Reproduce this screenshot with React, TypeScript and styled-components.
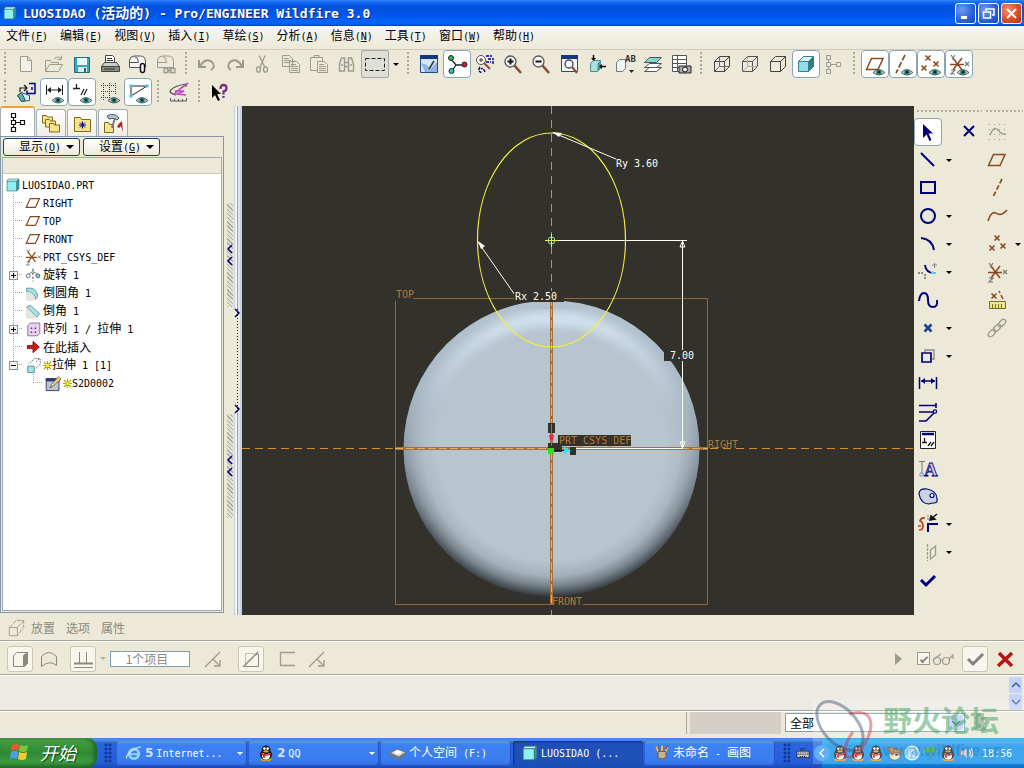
import React, { Fragment, ReactNode } from 'react';
import styled, { createGlobalStyle, css } from 'styled-components';

const CJK = '"Noto Sans CJK SC", sans-serif';
const MONO = '"DejaVu Sans Mono", "Noto Sans CJK SC", monospace';
const FACE = '#ece9d8';
const NAVY = '#00007c';
const BROWN = '#8a4a20';
const GRAY = '#9c9a8c';

const Global = createGlobalStyle`
  *, *::before, *::after { box-sizing: border-box; }
  body { margin: 0; background: ${FACE}; font: 12px/18px ${CJK}; color: #000; }
  button, input, select { font: inherit; color: inherit; margin: 0; padding: 0; border: 0; background: none; }
  svg { display: block; flex: none; overflow: visible; }
`;

/* ---------- text: CJK at full size, Latin in half-width cells ---------- */

const Run = styled.span`
  white-space: pre;
`;
const Latin = styled.span<{ $size: number }>`
  font-family: ${MONO};
  font-size: ${(p) => p.$size}px;
`;

function Label({ text, hot, size = 10 }: { text: string; hot?: string; size?: number }) {
  const parts = text.split(/([\u2e80-\u9fff]+)/).filter(Boolean);
  return (
    <Run>
      {parts.map((part, i) =>
        /[\u2e80-\u9fff]/.test(part) ? (
          <Fragment key={i}>{part}</Fragment>
        ) : (
          <Latin key={i} $size={size}>{part}</Latin>
        ),
      )}
      {hot && (
        <Latin $size={size}>
          (<u>{hot}</u>)
        </Latin>
      )}
    </Run>
  );
}

/* ---------- icons, drawn on a 20 by 20 grid ---------- */

const eye = (
  <g>
    <path d="M8 18.500q5.500-6 12 0q-6 5-12 0z" fill="#b9c9c4" stroke="#444" strokeWidth=".8" />
    <circle cx="14" cy="18.200" r="2.700" fill="#1f7d78" />
    <circle cx="14" cy="18.200" r="1.100" fill="#012" />
  </g>
);
const planeShape = <path d="M6.500 4.500H18L13 15.500H1.500z" />;
const csys = (
  <g fill="none" stroke={BROWN} strokeWidth="1.500">
    <path d="M1 10.500H15M4 4l9 12M13 4L4 16M8.500 9v3" />
    <path d="M2 1l2 3l2-3M4 4v2M2 16h4l-4 4h4M16 8l4 4M20 8l-4 4" stroke="#777" strokeWidth="1.200" />
  </g>
);
const cross = (x: number, y: number, r = 2.5) => `M${x - r} ${y - r}l${2 * r} ${2 * r}M${x + r} ${y - r}l${-2 * r} ${2 * r}`;
const cube = (front: string, top: string, side: string, line: string, inner?: string) => (
  <g stroke={line} strokeLinejoin="round">
    <path d="M2.500 7.500h10v10h-10z" fill={front} />
    <path d="M2.500 7.500l5-5h10l-5 5z" fill={top} />
    <path d="M12.500 7.500l5-5v10l-5 5z" fill={side} />
    {inner && <path d="M7.500 2.500v10h10M7.500 12.500l-5 5" fill="none" stroke={inner} />}
  </g>
);
const solid = (front: string, top: string, side: string, line: string) => (
  <g stroke={line} strokeLinejoin="round">
    <path d="M1.500 4.500h14v14h-14z" fill={front} />
    <path d="M1.500 4.500l2-3h15l-3 3z" fill={top} />
    <path d="M15.500 4.500l3-3v14l-3 3z" fill={side} />
  </g>
);
const magnifier = (inner: ReactNode) => (
  <g fill="none">
    <path d="M11 11l7 8" stroke="#8a4a30" strokeWidth="2.500" />
    <circle cx="7.500" cy="7.500" r="5.500" fill="#f8f8f4" stroke="#555" strokeWidth="1.300" />
    {inner}
  </g>
);

const ICONS: Record<string, ReactNode> = {
  new: <path d="M4.500 2.500h7l4 4v11h-11zM11.500 2.500v4h4" fill="#f3f1e6" stroke={GRAY} />,
  open: <path d="M1.500 17.500v-11h5l1 2h7v2M1.500 17.500l4-7h13l-4 7zM10 5q4-4 7 0M17.500 1.500v4h-4" fill="none" stroke={GRAY} />,
  save: (
    <g>
      <path d="M2.500 3.500h15v15h-15z" fill="#37a9b5" stroke="#1c6f80" />
      <path d="M5 4h10v7H5z" fill="#e8fbfb" />
      <path d="M6 13h9v5H6z" fill="#e4e4e4" />
      <path d="M12 14h2v4h-2z" fill="#1c6f80" />
    </g>
  ),
  print: (
    <g stroke="#444">
      <path d="M5.500 9V1.500h7l2 2V9" fill="#fff" />
      <path d="M1.500 12.500l3-4h12l3 4z" fill="#cfcfc8" />
      <path d="M1.500 12.500h18v5h-18z" fill="#8b8b86" />
      <path d="M7 4.500h5M7 6.500h6M4 15h11" stroke="#333" />
    </g>
  ),
  mailClip: (
    <g stroke="#555">
      <path d="M1.500 13.500V6q1-4 5-4h6q5 0 5 6v5.500z" fill="#f6f6f2" />
      <path d="M1.500 8.500h9q0-5-4-6" fill="none" />
      <rect x="12.500" y="9.500" width="4" height="9" rx="2" fill="#fff" stroke="#111" strokeWidth="1.500" />
    </g>
  ),
  mailLink: (
    <g stroke={GRAY} fill="none">
      <path d="M1.500 13.500V6q1-4 5-4h6q5 0 5 6v5.500zM1.500 8.500h9q0-5-4-6" />
      <path d="M8 14.500h4v4H8zM14 14.500h5v4h-5zM11 16.500h5" fill={FACE} strokeWidth="1.300" />
    </g>
  ),
  undo: <path d="M2 6v7h7M3 12q6-9 12-4q4 5-1 8" fill="none" stroke={GRAY} strokeWidth="2" />,
  redo: <path d="M18 6v7h-7M17 12q-6-9-12-4q-4 5 1 8" fill="none" stroke={GRAY} strokeWidth="2" />,
  cut: (
    <g fill="none" stroke={GRAY} strokeWidth="1.300">
      <path d="M6 1.500l6 12M12 1.500l-5 12" />
      <ellipse cx="5.500" cy="15.500" rx="2" ry="2.700" />
      <ellipse cx="12.500" cy="15.500" rx="2" ry="2.700" />
    </g>
  ),
  copy: <path d="M1.500 1.500h7l3 3v8h-10zM8.500 7.500h7l3 3v8h-10zM3 4.500h5M3 6.500h7M3 8.500h5M10 10.500h5M10 12.500h7M10 14.500h7M10 16.500h7" fill="none" stroke={GRAY} />,
  paste: <path d="M1.500 3.500h12v4M1.500 3.500v13h7M5 4V1.500h5V4M8.500 7.500h7l3 3v8h-10zM10 10.500h5M10 12.500h7M10 14.500h7M10 16.500h7" fill="none" stroke={GRAY} />,
  find: <path d="M2.500 17V10l2-6h3v13zM11.500 17V4h3l2 6v7zM7.500 8.500h4M7.500 12.500h4M4 11h2M13 11h2" fill="none" stroke={GRAY} strokeWidth="1.400" />,
  marquee: <path d="M.5 4.500h19v12H.5z" fill="none" stroke="#222" strokeDasharray="4 2" />,
  repaint: (
    <g>
      <path d="M1.500 1.500h17v17h-17z" fill="#d6e6f6" stroke="#234a8c" />
      <path d="M1 1h18v4H1z" fill="#143680" />
      <path d="M2 9l6 2l3 4l7-7v10H6z" fill="#8fb4e0" />
      <path d="M15 7l-5 8" stroke="#333" strokeWidth="1.500" />
    </g>
  ),
  spin: (
    <g stroke="#222">
      <path d="M4 5l5 6M9 11h8M9 11l-4 6" fill="none" strokeWidth="1.300" />
      <circle cx="4" cy="4" r="2.500" fill="#2bb34a" />
      <circle cx="17.500" cy="10.500" r="2.500" fill="#c2242b" />
      <circle cx="4.500" cy="17" r="2.500" fill="#35c7bf" />
    </g>
  ),
  orient: (
    <g fill="none">
      <circle cx="6" cy="6" r="4.500" fill="#f7f3e6" stroke="#555" />
      <path d="M9 9l6 6" stroke="#8a4a30" strokeWidth="2" />
      <path d="M6 4v4M4 6h4" stroke="#333" />
      <path d="M11 2h6M13 5h6M11 8h5M18 7v4M5 13q-3 4 2 6M10 18q-2-5-4-3" stroke={NAVY} strokeDasharray="3 1" strokeWidth="1.400" />
    </g>
  ),
  zoomIn: magnifier(<path d="M4.500 7.500h6M7.500 4.500v6" stroke="#111" strokeWidth="2" />),
  zoomOut: magnifier(<path d="M4.500 7.500h6" stroke="#111" strokeWidth="2" />),
  refit: (
    <g fill="none">
      <path d="M2.500 2.500h16v15h-16z" fill="#f4f8fc" stroke="#234a8c" />
      <path d="M2 1h17v4H2z" fill="#143680" />
      <circle cx="10" cy="10" r="4" stroke="#444" strokeWidth="1.300" />
      <path d="M13 13l5 6" stroke="#8a4a30" strokeWidth="2" />
    </g>
  ),
  reorient: (
    <g>
      <path d="M3.500 9.500l3-3h7v8l-3 3h-7z" fill="#a8dfe0" stroke="#588" />
      <path d="M10.500 9.500v8l3-3v-8z" fill="#3c9aa0" />
      <path d="M6.500 1v5M13 12.500h6" stroke="#111" strokeWidth="1.500" />
      <path d="M4 4h5l-2.500 3zM15 10v5l-3-2.500z" fill="#111" />
    </g>
  ),
  saved: (
    <g>
      <path d="M1.500 8.500l3-3h6v9l-3 3h-6z" fill="#eef6f6" stroke="#777" />
      <text x="10" y="8" fontFamily={MONO} fontSize="9" fontWeight="bold" fill="#333">AB</text>
      <path d="M14 16h5l-2.500 3z" fill="#222" />
    </g>
  ),
  layers: (
    <g stroke="#555">
      <path d="M1.500 17.500l5-4h12l-5 4zM1.500 13.500l5-4h12l-5 4z" fill="#fff" />
      <path d="M1.500 8.500l5-5h12l-5 5z" fill="#7fd6d0" />
    </g>
  ),
  viewMgr: (
    <g>
      <path d="M1.500 1.500h14v16h-14zM1.500 5.500h14M1.500 9.500h14M1.500 13.500h14M6.500 1.500v16" fill="#fff" stroke="#555" />
      <path d="M8 12h12v7H8z" fill="#aaa" stroke="#222" />
      <circle cx="14" cy="15.500" r="2.500" fill="#eee" stroke="#111" />
    </g>
  ),
  wire: cube('none', 'none', 'none', '#444', '#666'),
  hidden: cube('none', 'none', 'none', '#555', '#b0ae9f'),
  noHidden: cube('none', 'none', 'none', '#444'),
  shaded: cube('#8fdfe4', '#d8f6f6', '#2c7f88', '#3d7f88'),
  tree: <path d="M2.500 1.500h4v4h-4zM2.500 8.500h4v4h-4zM2.500 15.500h4v4h-4zM12.500 8.500h4v4h-4zM4.500 5.500v3M4.500 12.500v3M6.500 10.500h6" fill="none" stroke={GRAY} />,
  treeDark: <path d="M3.500 1.500h4v4h-4zM3.500 8.500h4v4h-4zM3.500 15.500h4v4h-4zM12.500 8.500h4v4h-4zM5.500 5.500v3M5.500 12.500v3M7.500 10.500h5" fill="#fff" stroke="#111" strokeWidth="1.200" />,
  planeEye: <g><g fill="none" stroke={BROWN} strokeWidth="1.500">{planeShape}</g>{eye}</g>,
  axisEye: <g><path d="M12 1L3 19" stroke={BROWN} strokeWidth="1.700" strokeDasharray="6 2" />{eye}</g>,
  pointEye: <g><path d={cross(7, 4) + cross(15, 10) + cross(3, 14)} stroke={BROWN} strokeWidth="1.600" />{eye}</g>,
  csysEye: <g>{csys}{eye}</g>,
  sketchView: (
    <g>
      <path d="M13 1.500h6v10h-8v-3M15 1.500v0M16 5v3" fill="none" stroke={NAVY} strokeWidth="1.500" />
      <path d="M4 10V6h6M8 3l3 3l-3 3" fill="none" stroke="#111" strokeWidth="1.200" />
      <path d="M1.500 13.500l4-3l8 3v5l-8 1z" fill="#d5eeee" stroke="#356" />
      <path d="M1.500 13.500l4-3l4 8l-4 1z" fill="#5fa9ad" stroke="#356" />
    </g>
  ),
  dimEye: <g><path d="M2.500 3v10M18.500 3v10M4 8h13" stroke="#222" fill="none" /><path d="M3 8l4-3v6zM18 8l-4-3v6z" fill="#222" />{eye}</g>,
  consEye: <g><path d="M1 6.500h7M4.500 2v4.500M9 13l3-6M12 13l3-6" stroke="#222" strokeWidth="1.300" fill="none" />{eye}</g>,
  gridEye: (
    <g>
      <path d="M1 3.500h16M1 9.500h16M1 15.500h8M3.500 1v17M9.500 1v17M15.500 1v12" stroke="#334" strokeDasharray="1 1" fill="none" />
      {eye}
    </g>
  ),
  vertEye: (
    <g>
      <path d="M3 4h16L3 14z" fill="none" stroke="#222" />
      <path d="M1.500 2.500h3v3h-3zM17.500 2.500h3v3h-3zM1.500 12.500h3v3h-3z" fill="#35c7e8" />
      {eye}
    </g>
  ),
  analyse: (
    <g fill="none">
      <path d="M7 13q-8-2-5-5q3-4 15-6M17 2v3" stroke="#555" strokeWidth="1.200" />
      <path d="M19 1l-8 6l-6 5M6 9h9l-7 3l9 1" stroke="#c048c0" strokeWidth="1.600" />
      <path d="M1.500 16v3h16v-3M5.500 17v2M9.500 17v2M13.500 17v2" stroke="#555" />
    </g>
  ),
  help: (
    <g>
      <path d="M2 3v13l3-3l3 6l2-1l-3-6h4z" fill="#000" />
      <path d="M10.500 7q0-4 3-4t3 3t-3 3.500v3M13.500 14v2" fill="none" stroke="#7a2f8a" strokeWidth="2.300" />
    </g>
  ),
  folders: (
    <g fill="#f6e48c" stroke="#7d6a1c">
      <path d="M1.500 2.500h4l1 1.500h5v6h-10z" />
      <path d="M4.500 6.500h4l1 1.500h5v6h-10z" />
      <path d="M8.500 10.500h4l1 1.500h5v7h-10z" />
    </g>
  ),
  favorites: (
    <g>
      <path d="M2.500 4.500h6l1 2h9v12h-16z" fill="#f6e48c" stroke="#7d6a1c" />
      <path d={cross(10.5, 12) + 'M10.500 8.500v7M7 12h7'} stroke={NAVY} />
    </g>
  ),
  hammer: (
    <g>
      <path d="M1.500 9.500h4l1 2h4v8h-9z" fill="#f6e48c" stroke="#7d6a1c" />
      <path d="M4 3q7-4 12 2l-2 2q-4-3-8-1z" fill="#a9c6dc" stroke="#456" />
      <path d="M12 5L9 15" stroke="#876" strokeWidth="2" />
      <path d="M19 8q-3 2-5 6l2 1l2-2l2 6z" fill="#b02020" />
    </g>
  ),
  pointer: <path d="M5 2v14l3.500-3.500l3 6.500l2-1l-3-6.500H15z" fill={NAVY} />,
  line: <path d="M3 3l13 13" stroke={NAVY} strokeWidth="2" />,
  rect: <path d="M3 4h14v11H3z" fill="none" stroke={NAVY} strokeWidth="2" />,
  circle: <circle cx="10" cy="10" r="7" fill="none" stroke={NAVY} strokeWidth="2" />,
  arc: <path d="M3 4q11 1 13 12" fill="none" stroke={NAVY} strokeWidth="2" />,
  fillet: (
    <g fill="none" strokeWidth="2">
      <path d="M7 3q1 8 9 8" stroke={NAVY} />
      <path d="M0 11h6M7 12v6" stroke="#888" strokeDasharray="2 1" />
      <path d="M14 3h5M16.500 1v5" stroke="#888" strokeWidth="1" />
      <path d="M13 11h5" stroke="#56c8ee" />
    </g>
  ),
  spline: <path d="M1 11q1-8 5-8t4 7t5 7t4-7" fill="none" stroke={NAVY} strokeWidth="2" />,
  point: <path d={cross(10, 10, 3.5)} stroke="#1640a0" strokeWidth="2.500" />,
  offset: <g fill="none"><path d="M7 6V4h9v9h-2" stroke="#888" strokeWidth="1.300" /><path d="M4 7h9v9H4z" stroke={NAVY} strokeWidth="1.700" /></g>,
  dim: <g><path d="M1.500 3v12M18.500 3v12M3 7h14" stroke={NAVY} strokeWidth="1.500" /><path d="M3 7l4-3v6zM17 7l-4-3v6z" fill={NAVY} /></g>,
  modify: (
    <g fill="none" stroke={NAVY} strokeWidth="1.600">
      <path d="M1 3.500h17M18 1v5M1 19h7l8-8" />
      <path d="M1 10h8M9 10h7" strokeDasharray="8 1 1 1 1 1 1" />
      <circle cx="17" cy="9.500" r="1.700" strokeWidth="1.200" />
    </g>
  ),
  constrain: (
    <g fill="none">
      <path d="M2.500 1.500h15v17h-15z" fill="#fff" stroke="#222" />
      <path d="M4 4h12" stroke={NAVY} strokeWidth="2.500" />
      <path d="M4 12.500h5M6.500 8v4.500M10 16l3-4M13 16l3-4" stroke="#111" strokeWidth="1.300" />
    </g>
  ),
  text: (
    <g fill="none">
      <path d="M1 3.500h6M4 3.500V16" stroke="#777" />
      <path d="M2 15h3v3H2z" stroke="#6a9fd8" />
      <text x="6" y="18" fontFamily="Liberation Serif, serif" fontSize="19" fontWeight="bold" fill="#c5cfe6" stroke={NAVY} strokeWidth=".8">A</text>
    </g>
  ),
  palette: (
    <g stroke={NAVY} strokeWidth="1.200">
      <path d="M1 8q0-6 8-5q10 2 10 10q1 4-3 4q-3 0-5 1q-8 0-10-10z" fill="#c9d4e4" />
      <circle cx="14" cy="9.500" r="2" fill="#fff" />
    </g>
  ),
  trim: (
    <g fill="none">
      <path d="M0 12h3M1 16q4 0 4-4t-3-5q1-4 5-3" stroke="#b0461c" strokeWidth="1.700" />
      <path d="M10 18v-8h10" stroke={NAVY} strokeWidth="2" />
      <path d="M10 1v6" stroke="#777" strokeDasharray="2 1" />
      <path d="M19 0l-5 4M12 6l1-4l4 3z" stroke="#111" strokeWidth="1.500" fill="#111" />
    </g>
  ),
  mirror: <g fill="none" stroke={GRAY} strokeWidth="1.300"><path d="M9.500 2v17" strokeDasharray="3 1" /><path d="M12.500 8l5-4v9l-5 4z" /></g>,
  done: <path d="M3 10l5 5l9-9" fill="none" stroke={NAVY} strokeWidth="3" />,
  bigX: <path d={cross(10, 9, 5)} stroke={NAVY} strokeWidth="2" />,
  sketchGray: (
    <g fill="none" stroke={GRAY}>
      <path d="M2 2.500h18M2 7.500h18M2 12.500h18M2 17.500h18" strokeDasharray="1 4" />
      <path d="M3 13q4-10 8-5t8 4" strokeWidth="1.300" />
    </g>
  ),
  plane: <g fill="none" stroke={BROWN} strokeWidth="1.500">{planeShape}</g>,
  axis: <path d="M15 1L6 19" stroke={BROWN} strokeWidth="1.700" strokeDasharray="5 2" />,
  curve: <path d="M1 15q3-10 8-8q5 4 11-3" fill="none" stroke={BROWN} strokeWidth="1.600" />,
  points: <path d={cross(10, 4) + cross(16, 12) + cross(5, 14)} stroke={BROWN} strokeWidth="1.600" />,
  csys,
  field: (
    <g>
      <path d={cross(7, 6) + 'M12 1l1 2M14 5l2 4'} stroke={BROWN} strokeWidth="1.600" />
      <path d="M2.500 11.500h16v7h-16z" fill="#f0e68a" stroke="#777028" />
      <path d="M5.500 14v4M8.500 14v4M11.500 14v4M14.500 14v4" stroke="#777028" />
    </g>
  ),
  chain: (
    <g fill="none" stroke={GRAY} strokeWidth="1.300">
      <ellipse cx="15" cy="5" rx="4.500" ry="2.500" transform="rotate(-45 15 5)" />
      <ellipse cx="10" cy="10" rx="4.500" ry="2.500" transform="rotate(-45 10 10)" />
      <ellipse cx="5" cy="15" rx="4.500" ry="2.500" transform="rotate(-45 5 15)" />
    </g>
  ),
  revolve: (
    <g fill="none" stroke="#456">
      <path d="M10 2v16" strokeDasharray="3 2" stroke="#111" />
      <circle cx="4" cy="11" r="2.500" />
      <circle cx="16" cy="11" r="2.500" fill="#78c8c8" />
      <path d="M5 9q5-6 10 0" />
    </g>
  ),
  round: <g><path d="M2 4q12-2 14 10l-3 4q0-9-11-10z" fill="#a4e4e8" stroke="#588" /><path d="M2 9q9 0 10 8l-3 2H2z" fill="#e7e4da" stroke="#ddd" /></g>,
  chamfer: <g><path d="M2 5l5-2l11 10l-3 5z" fill="#a4e4e8" stroke="#588" /><path d="M2 7l11 10l-3 2H2z" fill="#e7e4da" stroke="#ddd" /></g>,
  pattern: (
    <g>
      <path d="M3.500 5.500l3-3h12v13l-3 3h-12z" fill="#e8d3ee" stroke="#7b5c86" />
      <path d="M7 8h2v2H7zM12 8h2v2h-2zM7 13h2v2H7zM12 13h2v2h-2z" fill="#7a2f8a" />
    </g>
  ),
  insert: <path d="M3 8h7V3l8 7l-8 7v-5H3z" fill="#cc1818" stroke="#700" />,
  extrude: <g fill="none"><path d="M3.500 11.500h8v8h-8z" fill="#9fe6ec" stroke="#377" /><path d="M4 9l8-7h7v7l-6 6M14 6l4-4" stroke="#456" strokeDasharray="2 1" /></g>,
  sketch: (
    <g>
      <path d="M1.500 4.500h16v15h-16z" fill="#b8c4dc" stroke="#223" />
      <path d="M1 4h17v4H1z" fill="#2a3a70" />
      <path d="M6 16l2-4l9-10l3 3l-10 9z" fill="#f3d27a" stroke="#654" />
    </g>
  ),
  part: solid('#8ff0f0', '#dffcfc', '#2e9ea4', '#34777c'),
  extrudeGray: <g fill="none" stroke={GRAY}><path d="M2.500 9.500h9v9h-9z" /><path d="M2.500 9.500l8-8h8v8l-7 9M11.500 9.500l7-8" strokeDasharray="5 1" /></g>,
  solidGray: <g stroke="#8b897c"><path d="M3.500 6.500l3-3h11v11l-3 3h-11z" fill="#f7f5ec" /><path d="M13.500 6.500v11l4-3v-11z" fill="#8b897c" /></g>,
  surfGray: <path d="M2.500 7.500q7-8 15 0v9q-7-6-15 1z" fill="none" stroke="#8b897c" />,
  depthGray: <g stroke="#8b897c" fill="none"><path d="M6.500 3v11M13.500 3v11M1 18.500h19" /><path d="M1 14.500h19" strokeWidth="2" /></g>,
  flipGray: <path d="M2 18L17 3M10 10l6 6M17 11v6h-6" fill="none" stroke={GRAY} strokeWidth="1.300" />,
  removeGray: <g fill="none" stroke="#8b897c"><path d="M4.500 17.500v-13h9" strokeDasharray="1 1" /><path d="M4.500 17.500h13v-12h-4" /><path d="M2 18L17 3" strokeWidth="1.500" /></g>,
  thickGray: <path d="M18 3.500H3.500v13H18" fill="none" stroke={GRAY} strokeWidth="1.300" />,
  play: <path d="M7 4v12l7-6z" fill={GRAY} />,
  glasses: <g fill="none" stroke={GRAY} strokeWidth="1.200"><circle cx="4" cy="12" r="3.500" /><circle cx="13" cy="12" r="3.500" /><path d="M7.500 11h2M1 10l7-5M16 10l4-4v4" /></g>,
  okGray: <path d="M3 10l5 5l10-10" fill="none" stroke="#84827a" strokeWidth="3" />,
  cancel: <path d="M4 4l13 13M17 4L3 17" stroke="#b81414" strokeWidth="3.500" />,
  traffic: <path d="M6 1h8v4l3 1l-3 1v3l3 1l-3 1v3l3 1l-3 3H6l-3-3l3-1v-3l-3-1l3-1V7L3 6l3-1z" fill="#a3b3a2" />,
  windows: (
    <g>
      <path d="M2 3q4-2 7 0l-1 6q-4-2-7 0z" fill="#f0562a" />
      <path d="M10 3q4 2 8 0l-1 6q-4 2-8 0z" fill="#7cc63c" />
      <path d="M1 10q4-2 7 0l-1 7q-4-2-7 0z" fill="#4aa0f0" />
      <path d="M9 10q4 2 8 0l-1 7q-4 2-8 0z" fill="#f7c92c" />
    </g>
  ),
  ie: (
    <g fill="none">
      <circle cx="10" cy="11" r="6" stroke="#8fd4fa" strokeWidth="3.500" />
      <path d="M5 11.500h10" stroke="#8fd4fa" strokeWidth="2.500" />
      <path d="M1 17q-2-4 7-10t11-4" stroke="#cfe9fb" strokeWidth="1.500" />
    </g>
  ),
  qq: (
    <g>
      <ellipse cx="10" cy="18" rx="7" ry="2" fill="#f0a020" />
      <ellipse cx="10" cy="12" rx="7.500" ry="7" fill="#181818" />
      <ellipse cx="10" cy="13.500" rx="5" ry="5" fill="#fff" />
      <circle cx="10" cy="6" r="5.500" fill="#181818" />
      <circle cx="8" cy="4.500" r="1.600" fill="#fff" />
      <circle cx="12" cy="4.500" r="1.600" fill="#fff" />
      <ellipse cx="10" cy="8" rx="3.500" ry="1.400" fill="#f0a020" />
      <path d="M4 10q6 3 12 0v2q-6 3-12 0zM6 12h3v4H6z" fill="#d8231f" />
    </g>
  ),
  drive: <g><path d="M0 10l9-5l11 4l-9 6z" fill="#d7d7d7" stroke="#666" /><path d="M0 10l11 5v3l-11-5zM20 9l-9 6v3l9-6z" fill="#777" /><ellipse cx="10" cy="9" rx="4" ry="2" fill="#fff" /></g>,
  paint: (
    <g>
      <path d="M6 10L3 2M10 9V1M14 10l3-8" stroke="#f0c040" strokeWidth="2.500" />
      <path d="M5 2l2 5M15 5l2-4" stroke="#c03020" strokeWidth="1.500" />
      <path d="M5 8h10v8q-5 3-10 0z" fill="#c9b48a" stroke="#5b4a2a" />
    </g>
  ),
  keyboard: <g><path d="M7 7V4h6" stroke="#222" fill="none" /><path d="M1.500 7.500h17v9h-17z" fill="#eee" stroke="#111" /><path d="M3 10h14M3 12.500h14M5 15h10" stroke="#111" strokeWidth="1.300" strokeDasharray="2 1" /></g>,
  dog: <g><ellipse cx="11" cy="13" rx="7" ry="6" fill="#f1e2c0" stroke="#6a4a20" /><path d="M1 4l6-2l3 3l8 1l1 6l-6-3l-6 3z" fill="#c8863c" stroke="#6a4a20" /><circle cx="13" cy="12" r="1.500" fill="#111" /></g>,
  kav: <g><circle cx="10" cy="10" r="8.500" fill="#6cc4f4" stroke="#dff3ff" strokeWidth="2" /><path d="M7 5v10M13 5l-6 5l6 5" stroke="#fff" strokeWidth="2" fill="none" /></g>,
  umbrella: <g><path d="M1 10q2-8 9-8t9 8q-3-2-5 0q-4-2-8 0q-2-2-5 0z" fill="#3fae3a" /><path d="M10 9v8q-2 2-3 0" stroke="#386" fill="none" strokeWidth="1.500" /></g>,
  speaker: <g><path d="M3 7h4l5-4v14l-5-4H3z" fill="#cfd2d6" stroke="#667" /><path d="M14 6q3 4 0 8M16 4q5 6 0 12" stroke="#e8eef4" fill="none" strokeWidth="1.500" /></g>,
};

function Icon({ name, size = 20 }: { name: string; size?: number }) {
  return (
    <svg width={size} height={size} viewBox="0 0 20 20" aria-hidden="true">
      {ICONS[name]}
    </svg>
  );
}

/* ---------- window frame ---------- */

const Window = styled.div`
  display: flex;
  flex-direction: column;
  min-height: 100vh;
  position: relative;
  overflow: hidden;
`;

const TitleBar = styled.header`
  display: flex;
  align-items: center;
  gap: 6px;
  height: 26px;
  padding: 0 2px 0 3px;
  background: linear-gradient(#2f86f8 0, #1a6cf4 2px, #0453e0 6px, #0254e6 14px, #0364fb 21px, #0560f6 24px, #0340b8 26px);
  color: #fff;
`;
const Title = styled.h1`
  flex: 1;
  margin: 0;
  font-size: 14px;
  font-weight: bold;
  line-height: 20px;
  text-shadow: 1px 1px 0 #0a2a80;
`;
const WinButtons = styled.div`
  display: flex;
  gap: 2px;
`;
const WinButton = styled.button<{ $close?: boolean }>`
  display: grid;
  place-items: center;
  width: 21px;
  height: 21px;
  border: 1px solid #fff;
  border-radius: 3px;
  background: ${(p) => (p.$close ? 'radial-gradient(circle at 30% 30%, #f0906c, #d9481f 60%, #b93410)' : 'radial-gradient(circle at 30% 30%, #6e9bf0, #2a5fd8 60%, #1c48b8)')};
`;

const MenuBar = styled.nav`
  display: flex;
  height: 24px;
  border-bottom: 1px solid #cfccbb;
  background: linear-gradient(#f8f7f2, ${FACE});
`;
const MenuItem = styled.button`
  padding: 0 6px 2px;
  height: 22px;
  line-height: 18px;
`;

const ToolRow = styled.div`
  display: flex;
  align-items: center;
  height: 28px;
  background: ${FACE};
`;
const Grip = styled.span<{ $first?: boolean }>`
  flex: none;
  width: ${(p) => (p.$first ? 12 : 13)}px;
  height: 24px;
  background: repeating-linear-gradient(#a9a797 0 2px, transparent 2px 4px) ${(p) => (p.$first ? 4 : 5)}px 0 / 2px 100% no-repeat;
`;
const pressed = css`
  border: 1px solid #8aa5b8;
  border-radius: 4px;
  background: #fff;
`;
const ToolButton = styled.button<{ $on?: boolean; $muted?: boolean }>`
  display: grid;
  place-items: center;
  flex: none;
  width: 28px;
  height: 28px;
  ${(p) => p.$on && pressed}
  ${(p) => p.$muted && css`border: 1px solid #a3a9aa; border-radius: 2px; background: #e0dfd6;`}
`;
const Drop = styled.button`
  flex: none;
  width: 13px;
  height: 28px;
  display: grid;
  place-items: center;
`;
const Triangle = styled.span<{ $color?: string; $size?: number }>`
  border: ${(p) => p.$size ?? 3}px solid transparent;
  border-bottom-width: 0;
  border-top-color: ${(p) => p.$color ?? '#000'};
`;

type Tool = [icon: string, label: string, on?: boolean];
const fileTools: Tool[] = [['new', '新建'], ['open', '打开'], ['save', '保存'], ['print', '打印'], ['mailClip', '发送附件'], ['mailLink', '发送链接']];
const editTools: Tool[] = [['undo', '撤消'], ['redo', '重做'], ['cut', '剪切'], ['copy', '复制'], ['paste', '粘贴'], ['find', '查找']];
const viewTools: Tool[] = [['repaint', '重画'], ['spin', '旋转中心', true], ['orient', '定向模式'], ['zoomIn', '放大'], ['zoomOut', '缩小'], ['refit', '重新调整'], ['reorient', '重定向'], ['saved', '已保存视图'], ['layers', '层'], ['viewMgr', '视图管理器']];
const shadeTools: Tool[] = [['wire', '线框'], ['hidden', '隐藏线'], ['noHidden', '无隐藏线'], ['shaded', '着色', true], ['tree', '模型树']];
const datumTools: Tool[] = [['planeEye', '基准平面', true], ['axisEye', '基准轴', true], ['pointEye', '基准点', true], ['csysEye', '坐标系', true]];
const sketchTools: Tool[] = [['sketchView', '草绘方向'], ['dimEye', '尺寸显示', true], ['consEye', '约束显示', true], ['gridEye', '网格显示'], ['vertEye', '顶点显示', true]];

const Tools = ({ items }: { items: Tool[] }) => (
  <>
    {items.map(([icon, label, on]) => (
      <ToolButton key={icon} aria-label={label} $on={on}>
        <Icon name={icon} />
      </ToolButton>
    ))}
  </>
);

/* ---------- main area ---------- */

const Main = styled.main`
  display: flex;
  flex: 1;
  min-height: 500px;
`;

const Side = styled.aside`
  display: flex;
  flex-direction: column;
  flex: none;
  width: 224px;
  padding-bottom: 2px;
`;
const Tabs = styled.div`
  display: flex;
  align-items: flex-end;
  height: 30px;
  gap: 1px;
`;
const Tab = styled.button<{ $active?: boolean }>`
  display: grid;
  place-items: center;
  width: ${(p) => (p.$active ? 35 : 30)}px;
  height: ${(p) => (p.$active ? 30 : 27)}px;
  border: 1px solid #a3adb2;
  border-bottom: 0;
  border-radius: 3px 3px 0 0;
  background: linear-gradient(#fff, #f0eee4);
  ${(p) => p.$active && css`border-top: 2px solid #f0a030; background: #fff;`}
`;
const Panel = styled.div`
  display: flex;
  flex-direction: column;
  flex: 1;
  padding: 1px;
  border: 1px solid #8496a6;
`;
const PanelButtons = styled.div`
  display: flex;
  gap: 3px;
  padding: 0 1px 1px;
`;
const PanelButton = styled.button`
  display: flex;
  align-items: center;
  justify-content: flex-end;
  gap: 5px;
  width: 77px;
  height: 18px;
  padding-right: 5px;
  border: 1px solid #1d4068;
  border-radius: 3px;
  background: linear-gradient(#fff, #eceadd);
  line-height: 14px;
`;
const TreeHead = styled.div`
  height: 17px;
  border: 1px solid #9aa9b4;
  border-bottom-color: #cbc8b8;
  background: ${FACE};
`;
const Tree = styled.ul`
  flex: 1;
  margin: 0;
  padding: 2px 0;
  list-style: none;
  border: 1px solid #9aa9b4;
  border-top: 0;
  background: #fff;
`;
const TreeRow = styled.li<{ $depth: number }>`
  display: flex;
  align-items: center;
  height: 18px;
  gap: 2px;
  padding-left: ${(p) => (p.$depth ? 6 : 3)}px;
`;
const Branch = styled.span<{ $deep?: boolean; $last?: boolean }>`
  display: flex;
  align-items: center;
  align-self: stretch;
  width: ${(p) => (p.$deep ? 34 : 14)}px;
  background:
    repeating-linear-gradient(90deg, #aaa 0 1px, transparent 1px 2px) right 8px / 10px 1px no-repeat,
    repeating-linear-gradient(#aaa 0 1px, transparent 1px 2px) ${(p) => (p.$deep ? 24 : 4)}px 0 / 1px ${(p) => (p.$last ? '9px' : '100%')} no-repeat;
`;
const Expander = styled.button`
  display: grid;
  place-items: center;
  width: 9px;
  height: 9px;
  border: 1px solid #8a94a0;
  background: #f4f2ea;
`;
const Star = styled.span`
  margin-right: -2px;
`;

type Node = { icon: string; text: string; depth: number; box?: '+' | '-'; star?: boolean };
const nodes: Node[] = [
  { icon: 'part', text: 'LUOSIDAO.PRT', depth: 0 },
  { icon: 'plane', text: 'RIGHT', depth: 1 },
  { icon: 'plane', text: 'TOP', depth: 1 },
  { icon: 'plane', text: 'FRONT', depth: 1 },
  { icon: 'csys', text: 'PRT_CSYS_DEF', depth: 1 },
  { icon: 'revolve', text: '旋转 1', depth: 1, box: '+' },
  { icon: 'round', text: '倒圆角 1', depth: 1 },
  { icon: 'chamfer', text: '倒角 1', depth: 1 },
  { icon: 'pattern', text: '阵列 1 / 拉伸 1', depth: 1, box: '+' },
  { icon: 'insert', text: '在此插入', depth: 1 },
  { icon: 'extrude', text: '拉伸 1 [1]', depth: 1, box: '-', star: true },
  { icon: 'sketch', text: 'S2D0002', depth: 2, star: true },
];

function ModelTree() {
  return (
    <Tree>
      {nodes.map((n) => (
        <TreeRow key={n.text} $depth={n.depth}>
          {n.depth > 0 && (
            <Branch $deep={n.depth === 2} $last={n.box === '-' || n.depth === 2}>
              {n.box && (
                <Expander aria-label={n.box === '+' ? '展开' : '折叠'}>
                  <svg width="5" height="5" viewBox="0 0 5 5" shapeRendering="crispEdges">
                    <path d={n.box === '+' ? 'M0 2.500h5M2.500 0v5' : 'M0 2.500h5'} stroke="#000" />
                  </svg>
                </Expander>
              )}
            </Branch>
          )}
          <Icon name={n.icon} size={n.depth === 0 ? 14 : 16} />
          {n.star && (
            <Star>
              <svg width="9" height="9" viewBox="0 0 9 9">
                <path d="M4.500 0v9M0 4.500h9M1 1l7 7M8 1L1 8" stroke="#b8a400" strokeWidth="1.200" />
                <circle cx="4.500" cy="4.500" r="1.500" fill="#ffee20" />
              </svg>
            </Star>
          )}
          <Label text={n.text} />
        </TreeRow>
      ))}
    </Tree>
  );
}

const Gutter = styled.div`
  display: flex;
  flex-direction: column;
  justify-content: center;
  align-items: flex-end;
  gap: 107px;
  flex: none;
  width: 10px;
  padding-right: 1px;
`;
const Collapse = styled.button`
  display: flex;
  flex-direction: column;
  justify-content: center;
  align-items: center;
  gap: 4px;
  width: 6px;
  height: 104px;
  background: repeating-linear-gradient(45deg, #aeab9e 0 1px, #e4e1d4 1px 3px);
`;
const Splitter = styled.div`
  display: flex;
  align-items: center;
  flex: none;
  width: 8px;
  border-right: 2px solid #c9d3e4;
  background: linear-gradient(90deg, #c5cfe0 1px, #f4f4f0 1px 3px, #93a4c8 3px 4px, #dfe4ec 4px);
`;
const SplitHandle = styled.button`
  display: flex;
  flex-direction: column;
  justify-content: space-between;
  align-items: center;
  width: 6px;
  height: 104px;
  background: ${FACE} repeating-linear-gradient(${NAVY} 0 1px, transparent 1px 3px) 3px 0 / 1px 100% no-repeat;
`;
const Chevron = ({ dir, color = NAVY }: { dir: 'left' | 'right' | 'up' | 'down'; color?: string }) => {
  const d = { left: 'M5 0L1 4l4 4', right: 'M1 0l4 4l-4 4', up: 'M0 6l4-4l4 4', down: 'M0 2l4 4l4-4' }[dir];
  const tall = dir === 'left' || dir === 'right';
  return (
    <svg width={tall ? 6 : 8} height="8" viewBox={tall ? '0 0 6 8' : '0 0 8 8'}>
      <path d={d} fill="none" stroke={color} strokeWidth="1.500" />
    </svg>
  );
};

const Canvas = styled.section`
  flex: 1;
  min-width: 0;
  position: relative;
  overflow: hidden;
  background: #33312c;
  & > svg { position: absolute; inset: 0; width: 100%; height: 100%; }
`;

function Scene() {
  const label = { fontFamily: MONO, fontSize: 10 };
  return (
    <svg viewBox="0 0 672 509" preserveAspectRatio="xMidYMid slice" role="img" aria-label="LUOSIDAO 草绘视图">
      <defs>
        <linearGradient id="rim" x1="0" y1="0" x2="0" y2="1">
          <stop offset="0" stopColor="#b3c2cf" />
          <stop offset=".3" stopColor="#a9b8c5" />
          <stop offset=".55" stopColor="#87939e" />
          <stop offset=".78" stopColor="#4f575e" />
          <stop offset="1" stopColor="#33373b" />
        </linearGradient>
        <radialGradient id="face">
          <stop offset="0" stopColor="#b7c5cf" />
          <stop offset=".76" stopColor="#b7c5cf" />
          <stop offset=".86" stopColor="#b5c4cf" stopOpacity=".85" />
          <stop offset=".93" stopColor="#b5c4cf" stopOpacity=".5" />
          <stop offset="1" stopColor="#b0c0cc" stopOpacity="0" />
        </radialGradient>
        <linearGradient id="shine" x1="0" y1="0" x2="0" y2="1">
          <stop offset="0" stopColor="#d3e2ef" />
          <stop offset="1" stopColor="#c3d3e0" stopOpacity="0" />
        </linearGradient>
        <filter id="soft" x="-10%" y="-10%" width="120%" height="130%">
          <feGaussianBlur stdDeviation="4" />
        </filter>
      </defs>

      <g fill="none" stroke="#e08c24">
        <path d="M309.500 0V509" strokeDasharray="8 6" />
        <path d="M0 342.500H672" strokeDasharray="8 5" />
      </g>

      <circle cx="309.500" cy="342.500" r="148" fill="url(#rim)" />
      <circle cx="309.500" cy="342.500" r="148" fill="url(#face)" />
      <path d="M187 305A128 128 0 0 1 433 305" fill="none" stroke="url(#shine)" strokeWidth="15" filter="url(#soft)" />

      <g fill="none" stroke="#9a6636">
        <path d="M171 192.500H465.500V498.500H341M309 498.500H153.500V195" />
        <path d="M309.500 192V499M153 342.500H466" stroke="#a87038" strokeWidth="3" />
        <path d="M309.500 192V499M153 342.500H466" stroke="#e0b070" strokeDasharray="8 3" />
      </g>
      <ellipse cx="309.500" cy="134" rx="74" ry="107" fill="none" stroke="#f2f23c" strokeWidth="1.200" />

      <g fill="none" stroke="#fffff0">
        <path d="M309 134.500H445M440.500 134V244M440.500 255V342M330 342.500H441" />
        <path d="M374 53L312 27M273 189L236 136" />
        <path d="M303 134.500h13M309.500 128v13" stroke="#f2f23c" />
        <circle cx="309.500" cy="134.500" r="3.500" stroke="#9fe8a0" />
        <path d="M438 141l2.500-6l2.500 6zM438 336l2.500 6l2.500-6z" />
      </g>
      <path d="M310 26l10 1l-3 4zM236 135l7 5l-4 3z" fill="#fffff0" />

      <path d="M272 185h50v11h-50zM422 244h30v11h-30z" fill="#33312c" />
      <g {...label} fill="#fffff0">
        <text x="374" y="61">Ry 3.60</text>
        <text x="273" y="194">Rx 2.50</text>
        <text x="428" y="253">7.00</text>
      </g>

      <path d="M316 329h73v11h-73zM306 317h7v10h-7zM306 337h14v9h-14zM328 341h6v8h-6z" fill="#33312c" />
      <g {...label} fill="#b07a38">
        <text x="154" y="192">TOP</text>
        <text x="466" y="342">RIGHT</text>
        <text x="310" y="499">FRONT</text>
        <text x="317" y="338">PRT_CSYS_DEF</text>
      </g>
      <path d="M309.500 318v22" stroke="#b0702c" />
      <path d="M307 329h5l-1 5h-3z" fill="#f02050" />
      <path d="M312 344.500h16" stroke="#111" />
      <path d="M306 342h6v6h-6z" fill="#30e020" />
      <path d="M322 341l7 3.500l-7 3.500z" fill="#30e0f0" />
    </svg>
  );
}

const Palette = styled.aside`
  display: flex;
  flex: none;
  padding-top: 4px;
`;
const PaletteGroup = styled.div<{ $cols: string }>`
  display: grid;
  grid-template-columns: ${(p) => p.$cols};
  grid-auto-rows: 28px;
  align-content: start;
  padding-top: 8px;
  background: repeating-linear-gradient(90deg, #b3b0a0 0 2px, transparent 2px 4px) 3px 0 / calc(100% - 4px) 2px no-repeat;
`;

type Entry = [icon: string, label: string, drop?: boolean];
const sketchEntries: Entry[] = [
  ['pointer', '选取'], ['line', '线', true], ['rect', '矩形'], ['circle', '圆', true], ['arc', '弧', true],
  ['fillet', '圆角', true], ['spline', '样条'], ['point', '点', true], ['offset', '使用边', true], ['dim', '尺寸'],
  ['modify', '修改'], ['constrain', '约束'], ['text', '文本'], ['palette', '调色板'], ['trim', '修剪', true],
  ['mirror', '镜像', true], ['done', '完成'],
];
const datumEntries: Entry[] = [
  ['sketchGray', '草绘'], ['plane', '平面'], ['axis', '轴'], ['curve', '曲线'], ['points', '点', true],
  ['csys', '坐标系'], ['field', '分析'], ['chain', '参照'],
];

/* ---------- dashboard, messages and status ---------- */

const Dash = styled.div<{ $tall?: boolean }>`
  display: flex;
  align-items: center;
  flex: none;
  height: ${(p) => (p.$tall ? 34 : 27)}px;
  padding: 0 6px 0 7px;
  border-bottom: 1px solid #fff;
  box-shadow: inset 0 -1px #a9a697;
  color: #8b897c;
`;
const DashTab = styled.button`
  padding-right: 11px;
`;
const DashIcon = styled.span`
  display: flex;
  width: 24px;
`;
const DashButton = styled.button<{ $framed?: boolean; $gap?: number }>`
  display: grid;
  place-items: center;
  flex: none;
  width: 26px;
  height: 26px;
  margin-left: ${(p) => p.$gap ?? 0}px;
  ${(p) => p.$framed && css`border: 1px solid #c9c6b6; border-radius: 3px; background: #f7f5ec;`}
`;
const Collector = styled.input`
  width: 80px;
  height: 16px;
  margin: 0 10px 0 1px;
  padding-right: 6px;
  border: 1px solid #7f9db9;
  background: #fff;
  font: 12px/14px ${CJK};
  text-align: center;
`;
const Spacer = styled.span`
  flex: 1;
`;
const Check = styled.input`
  appearance: none;
  width: 13px;
  height: 13px;
  margin: 0 3px 0 6px;
  border: 1px solid #9c9a8c;
  background: #f7f5ec;
  display: grid;
  place-items: center;
  &:checked::before {
    content: '';
    width: 8px;
    height: 4px;
    border: solid #8b897c;
    border-width: 0 0 2px 2px;
    transform: rotate(-45deg);
  }
`;

const Messages = styled.div`
  display: flex;
  justify-content: flex-end;
  flex: none;
  height: 36px;
  padding: 1px 2px 0;
  border-bottom: 1px solid #fff;
  box-shadow: inset 0 -1px #a9a697;
  background: #ebeae3;
`;
const Scroll = styled.div`
  display: flex;
  flex-direction: column;
  gap: 1px;
`;
const ScrollButton = styled.button`
  display: grid;
  place-items: center;
  width: 13px;
  height: 16px;
  border-radius: 2px;
  background: #c4d3f8;
`;

const Status = styled.footer`
  display: flex;
  flex: none;
  height: 26px;
  border-bottom: 4px solid #e9e8e2;
`;
const StatusCell = styled.div`
  flex: 1;
  border-right: 1px solid #a9a697;
`;
const StatusGray = styled.div`
  width: 91px;
  margin: 0 4px 0 3px;
  background: #d3cec6;
`;
const Filter = styled.div`
  display: flex;
  align-items: center;
  width: 180px;
  height: 19px;
  margin-top: 1px;
  border: 1px solid #7f9db9;
  background: #fff;
`;
const FilterSelect = styled.select`
  flex: 1;
  appearance: none;
  height: 17px;
  padding-left: 4px;
  line-height: 17px;
  outline: 0;
`;
const FilterArrow = styled.span`
  display: grid;
  place-items: center;
  width: 15px;
  height: 15px;
  margin-right: 1px;
  border-radius: 2px;
  background: #c4d3f8;
`;
const StatusEnd = styled.div`
  display: flex;
  width: 59px;
  padding-left: 5px;
`;

const TaskBar = styled.div`
  display: flex;
  align-items: center;
  flex: none;
  height: 30px;
  background: linear-gradient(#3c81e8 0, #4a90f0 2px, #2a64dd 5px, #245edb 24px, #1b49b4 30px);
  color: #fff;
`;
const Start = styled.button`
  display: flex;
  align-items: center;
  gap: 10px;
  align-self: stretch;
  width: 97px;
  padding: 0 0 3px 10px;
  border-radius: 0 10px 10px 0;
  background: linear-gradient(#5eac56 0, #3f9a3f 4px, #2f8a35 15px, #3c9c3f 24px, #226b28 30px);
  box-shadow: inset -3px 0 4px #1e6428;
  font-size: 18px;
  font-style: italic;
  text-shadow: 1px 1px 1px #143c14;
`;
const TaskGrip = styled.span`
  flex: none;
  width: 8px;
  height: 20px;
  margin: 0 5px 0 7px;
  background: radial-gradient(circle, #15399a 1px, transparent 2px) 0 0 / 4px 4px;
`;
const Tasks = styled.div`
  display: flex;
  flex: 1;
  gap: 2px;
  min-width: 0;
`;
const Task = styled.button<{ $active?: boolean }>`
  display: flex;
  align-items: center;
  flex: 1 1 0;
  max-width: 130px;
  min-width: 0;
  gap: 3px;
  height: 25px;
  padding: 0 4px 0 9px;
  border-radius: 3px;
  background: ${(p) => (p.$active ? '#1e50b8' : 'linear-gradient(#5a97f8, #3c81f3 4px, #3a7cf0 20px, #2f6be0)')};
  box-shadow: ${(p) => (p.$active ? 'inset 1px 1px 2px #0f2f80' : 'inset -1px -1px 1px #2353c0')};
`;
const Count = styled.b`
  color: #d3e0f4;
  font: bold 12px/18px "DejaVu Sans", sans-serif;
`;
const Tray = styled.div`
  display: flex;
  align-items: center;
  align-self: stretch;
  gap: 2px;
  padding-right: 12px;
  background: linear-gradient(#1a9ae8 0, #19b0f4 3px, #1290e8 8px, #0f92ea 24px, #0e6ac4 30px);
`;
const TrayToggle = styled.button`
  display: grid;
  place-items: center;
  width: 16px;
  height: 16px;
  margin-left: -8px;
  border-radius: 50%;
  background: #3c9cf4;
`;
const Clock = styled.time`
  padding-left: 6px;
`;
const Language = styled.button`
  padding: 0 12px 0 0;
`;

const Watermark = styled.div`
  position: absolute;
  right: 0;
  bottom: 4px;
  display: flex;
  align-items: flex-start;
  gap: 6px;
  width: 211px;
  height: 64px;
  background: rgba(255, 255, 255, 0.2);
  pointer-events: none;
`;
const Mark = styled.div`
  display: flex;
  flex-direction: column;
`;
const MarkName = styled.span`
  color: rgba(70, 165, 100, 0.55);
  font: bold 29px/38px ${CJK};
`;
const MarkUrl = styled.span`
  color: rgba(10, 80, 150, 0.25);
  font: bold 16px/26px "Liberation Sans", sans-serif;
`;

const menus: [string, string][] = [['文件', 'F'], ['编辑', 'E'], ['视图', 'V'], ['插入', 'I'], ['草绘', 'S'], ['分析', 'A'], ['信息', 'N'], ['工具', 'T'], ['窗口', 'W'], ['帮助', 'H']];
const tasks: { icon: string; text: string; count?: number; drop?: boolean; active?: boolean }[] = [
  { icon: 'ie', text: 'Internet...', count: 5, drop: true },
  { icon: 'qq', text: 'QQ', count: 2, drop: true },
  { icon: 'drive', text: '个人空间 (F:)' },
  { icon: 'part', text: 'LUOSIDAO (...', active: true },
  { icon: 'paint', text: '未命名 - 画图' },
];
const trayIcons = ['qq', 'qq', 'qq', 'dog', 'kav', 'umbrella', 'qq', 'speaker'];

export default function App() {
  return (
    <Window>
      <Global />
      <TitleBar>
        <Icon name="part" size={14} />
        <Title>
          <Label text="LUOSIDAO (活动的) - Pro/ENGINEER Wildfire 3.0" size={13} />
        </Title>
        <WinButtons>
          <WinButton aria-label="最小化">
            <svg width="13" height="13"><path d="M2 10.500h6" stroke="#fff" strokeWidth="3" /></svg>
          </WinButton>
          <WinButton aria-label="还原">
            <svg width="13" height="13"><path d="M4 4V2h8v6h-2M1.500 5h7v6h-7z" fill="none" stroke="#fff" strokeWidth="1.500" /></svg>
          </WinButton>
          <WinButton $close aria-label="关闭">
            <svg width="13" height="13"><path d="M2 2l9 9M11 2l-9 9" stroke="#fff" strokeWidth="2" /></svg>
          </WinButton>
        </WinButtons>
      </TitleBar>

      <MenuBar>
        {menus.map(([text, hot]) => (
          <MenuItem key={hot}><Label text={text} hot={hot} /></MenuItem>
        ))}
      </MenuBar>

      <ToolRow>
        <Grip $first />
        <Tools items={fileTools} />
        <Grip />
        <Tools items={editTools} />
        <ToolButton $muted aria-label="选取框"><Icon name="marquee" /></ToolButton>
        <Drop aria-label="选取选项"><Triangle /></Drop>
        <Grip />
        <Tools items={viewTools} />
        <Grip />
        <Tools items={shadeTools} />
        <Grip />
        <Tools items={datumTools} />
      </ToolRow>
      <ToolRow>
        <Grip $first />
        <Tools items={sketchTools} />
        <Grip />
        <Tools items={[['analyse', '分析']]} />
        <Grip />
        <Tools items={[['help', '帮助']]} />
      </ToolRow>

      <Main>
        <Side>
          <Tabs>
            <Tab $active aria-label="模型树"><Icon name="treeDark" /></Tab>
            <Tab aria-label="文件夹"><Icon name="folders" /></Tab>
            <Tab aria-label="收藏夹"><Icon name="favorites" /></Tab>
            <Tab aria-label="连接"><Icon name="hammer" /></Tab>
          </Tabs>
          <Panel>
            <PanelButtons>
              <PanelButton><Label text="显示" hot="O" /><Triangle $size={4} /></PanelButton>
              <PanelButton><Label text="设置" hot="G" /><Triangle $size={4} /></PanelButton>
            </PanelButtons>
            <TreeHead />
            <ModelTree />
          </Panel>
        </Side>
        <Gutter>
          <Collapse aria-label="收起上部"><Chevron dir="left" /><Chevron dir="left" /></Collapse>
          <Collapse aria-label="收起下部"><Chevron dir="left" /><Chevron dir="left" /></Collapse>
        </Gutter>
        <Splitter>
          <SplitHandle aria-label="展开"><Chevron dir="right" /><Chevron dir="right" /></SplitHandle>
        </Splitter>
        <Canvas><Scene /></Canvas>
        <Palette>
          <PaletteGroup $cols="28px 13px 28px">
            {sketchEntries.map(([icon, label, drop], i) => (
              <Fragment key={icon}>
                <ToolButton $on={i === 0} aria-label={label}><Icon name={icon} /></ToolButton>
                {drop ? <Drop aria-label={label + '选项'}><Triangle /></Drop> : <span />}
                {i === 0 ? <ToolButton aria-label="退出"><Icon name="bigX" /></ToolButton> : <span />}
              </Fragment>
            ))}
          </PaletteGroup>
          <PaletteGroup $cols="28px 13px">
            {datumEntries.map(([icon, label, drop]) => (
              <Fragment key={icon}>
                <ToolButton aria-label={label}><Icon name={icon} /></ToolButton>
                {drop ? <Drop aria-label={label + '选项'}><Triangle /></Drop> : <span />}
              </Fragment>
            ))}
          </PaletteGroup>
        </Palette>
      </Main>

      <Dash>
        <DashIcon><Icon name="extrudeGray" size={18} /></DashIcon>
        <DashTab>放置</DashTab>
        <DashTab>选项</DashTab>
        <DashTab>属性</DashTab>
      </Dash>
      <Dash $tall>
        <DashButton $framed aria-label="实体"><Icon name="solidGray" /></DashButton>
        <DashButton $gap={3} aria-label="曲面"><Icon name="surfGray" /></DashButton>
        <DashButton $framed $gap={8} aria-label="深度"><Icon name="depthGray" /></DashButton>
        <Drop aria-label="深度选项"><Triangle $color="#b0ae9f" /></Drop>
        <Collector aria-label="深度参照" readOnly value="1个项目" />
        <DashButton aria-label="反向"><Icon name="flipGray" /></DashButton>
        <DashButton $framed $gap={12} aria-label="去除材料"><Icon name="removeGray" /></DashButton>
        <DashButton $gap={10} aria-label="加厚"><Icon name="thickGray" /></DashButton>
        <DashButton $gap={4} aria-label="反向材料"><Icon name="flipGray" /></DashButton>
        <Spacer />
        <DashButton aria-label="继续"><Icon name="play" /></DashButton>
        <Check type="checkbox" defaultChecked aria-label="预览" />
        <Icon name="glasses" />
        <DashButton $framed $gap={9} aria-label="确定"><Icon name="okGray" /></DashButton>
        <DashButton $gap={4} aria-label="取消"><Icon name="cancel" /></DashButton>
      </Dash>

      <Messages>
        <Scroll>
          <ScrollButton aria-label="向上"><Chevron dir="up" color="#3c5a98" /></ScrollButton>
          <ScrollButton aria-label="向下"><Chevron dir="down" color="#3c5a98" /></ScrollButton>
        </Scroll>
      </Messages>

      <Status>
        <StatusCell />
        <StatusGray />
        <Filter>
          <FilterSelect aria-label="选取过滤器"><option>全部</option></FilterSelect>
          <FilterArrow><Chevron dir="down" color="#3c5a98" /></FilterArrow>
        </Filter>
        <StatusEnd><Icon name="traffic" /></StatusEnd>
      </Status>

      <TaskBar>
        <Start><Icon name="windows" />开始</Start>
        <TaskGrip />
        <Tasks>
          {tasks.map((t) => (
            <Task key={t.text} $active={t.active}>
              <Icon name={t.icon} size={16} />
              {t.count && <Count>{t.count}</Count>}
              <Label text={t.text} />
              {t.drop && (
                <>
                  <Spacer />
                  <Triangle $color="#fff" />
                </>
              )}
            </Task>
          ))}
        </Tasks>
        <TaskGrip />
        <Language aria-label="输入法"><Icon name="keyboard" size={14} /></Language>
        <Tray>
          <TrayToggle aria-label="显示隐藏图标"><Chevron dir="left" color="#fff" /></TrayToggle>
          {trayIcons.map((name, i) => <Icon key={i} name={name} size={16} />)}
          <Clock><Label text="18:56" /></Clock>
        </Tray>
      </TaskBar>

      <Watermark>
        <svg width="64" height="64" viewBox="0 0 64 64" fill="none" aria-hidden="true">
          <ellipse cx="27" cy="26" rx="29" ry="17" transform="rotate(48 27 26)" stroke="rgba(60,80,110,.45)" strokeWidth="3" />
          <path d="M36 14q22-6 22 12q-2 18-18 30q-8 4-8-4q0-10 8-20" stroke="rgba(200,50,70,.45)" strokeWidth="3" />
        </svg>
        <Mark>
          <MarkName>野火论坛</MarkName>
          <MarkUrl>www.wildfire.cn</MarkUrl>
        </Mark>
      </Watermark>
    </Window>
  );
}
